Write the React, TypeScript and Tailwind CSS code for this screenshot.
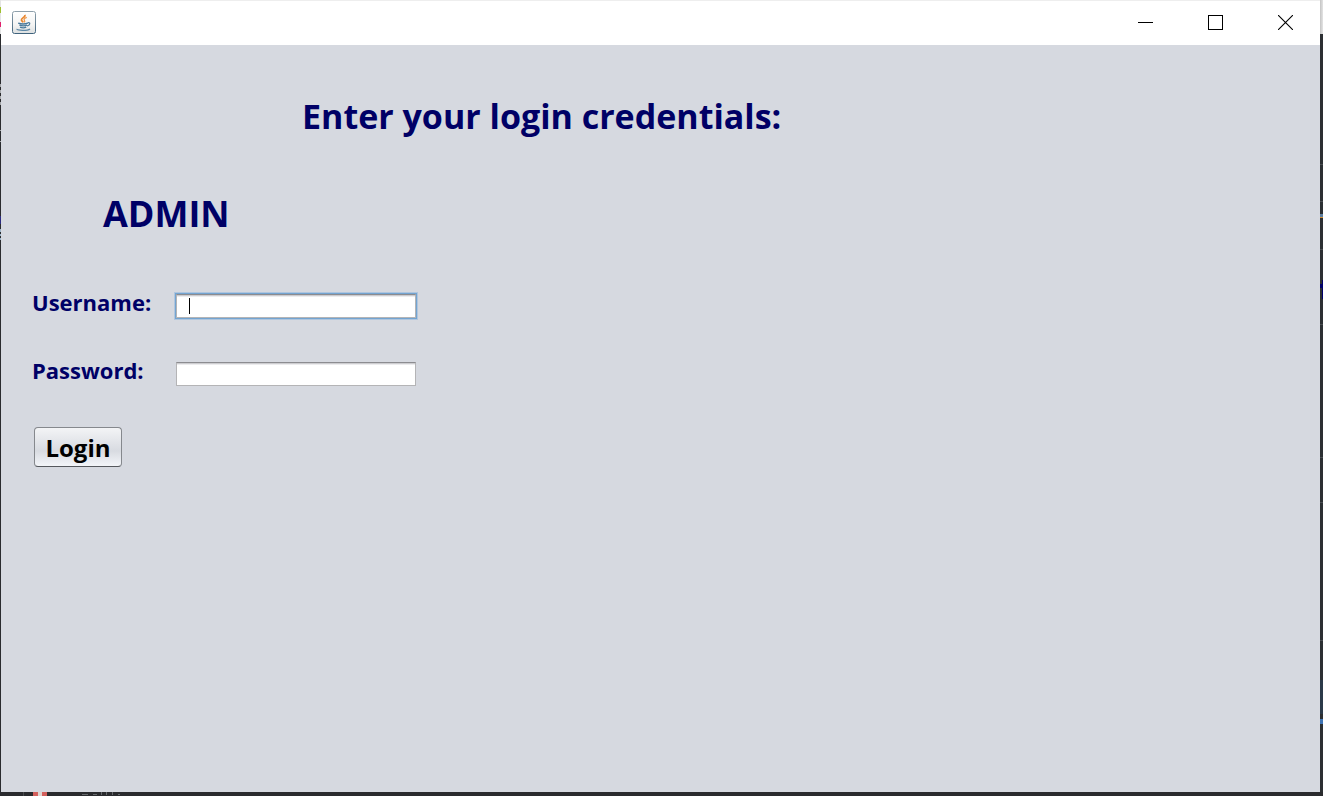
import React from "react";

function JavaIcon() {
  return (
    <svg width="24" height="24" viewBox="0 0 24 24" fill="none" aria-hidden="true">
      <defs>
        <linearGradient id="tile" x1="0" y1="0" x2="0" y2="1">
          <stop offset="0" stopColor="#ffffff" />
          <stop offset="0.6" stopColor="#f4f4f3" />
          <stop offset="1" stopColor="#dcdfe0" />
        </linearGradient>
        <linearGradient id="edge" x1="0" y1="0" x2="0" y2="1">
          <stop offset="0" stopColor="#8fa0ab" />
          <stop offset="1" stopColor="#3f637d" />
        </linearGradient>
      </defs>
      <rect x="0.5" y="0.5" width="23" height="22" rx="2" fill="url(#tile)" stroke="url(#edge)" />
      <path d="M12.8 3.8c1.2 2.4-3.8 3-3.4 5.2.2 1 1.4 1.4 1.8 2.4" stroke="#e8842c" strokeWidth="1.7" />
      <path d="M14.8 6.4c-2.2.8-3.4 1.8-2.4 3 .6.8.4 1.4-.2 2" stroke="#f09a4c" strokeWidth="1.3" />
      <path d="M6.2 12.2c2.6.9 7.2.9 9.6 0M7.4 14.2c2.4.8 5.8.8 7.6 0M8 16.2c2 .8 4.6.8 6.2 0" stroke="#4a7a9c" strokeWidth="1.4" />
      <path d="M15.6 11.8c2.8-.8 3.2 2-.6 3.2" stroke="#4a7a9c" strokeWidth="1.2" />
      <path d="M5 17.9c-.6 1.8 10.8 1.9 13 0" stroke="#5d88a6" strokeWidth="1.3" />
    </svg>
  );
}

function TitleBar() {
  return (
    <header className="flex h-11 items-center justify-between bg-white pb-px pl-[11px]">
      <JavaIcon />
      <div className="flex h-full">
        <button aria-label="Minimize" className="flex w-[70px] items-center justify-center">
          <svg width="15" height="15" viewBox="0 0 15 15" shapeRendering="crispEdges">
            <path d="M0 7.5h15" stroke="#000" />
          </svg>
        </button>
        <button aria-label="Maximize" className="flex w-[70px] items-center justify-center">
          <svg width="15" height="15" viewBox="0 0 15 15" fill="none" shapeRendering="crispEdges">
            <rect x="0.5" y="0.5" width="14" height="14" stroke="#000" />
          </svg>
        </button>
        <button aria-label="Close" className="flex w-[70px] items-center justify-center">
          <svg width="15" height="15" viewBox="0 0 15 15">
            <path d="M0 0L15 15M15 0L0 15" stroke="#000" strokeWidth="1.1" />
          </svg>
        </button>
      </div>
    </header>
  );
}

/* Slivers of the dark editor that shows around the window. */
function LeftSliver() {
  return (
    <div className="w-px">
      <svg width="1" height="250" aria-hidden="true" shapeRendering="crispEdges">
        <rect width="1" height="34" fill="#e4e4e4" />
        <rect y="7" width="1" height="6" fill="#9fc02f" />
        <rect y="22" width="1" height="5" fill="#e0206c" />
        <path d="M.5 84v3M.5 90v3M.5 96v3M.5 102v3M.5 130v1M.5 141v1" stroke="#a5a7aa" />
        <path d="M.5 216v8" stroke="#2b2a80" />
        <path d="M.5 229v3M.5 234v2M.5 238v2" stroke="#9db4c8" />
      </svg>
    </div>
  );
}

function RightSliver() {
  return (
    <div className="w-[3px] bg-linear-to-r from-[#c4c4c4] to-[#e4e4e4]">
      <div className="mt-[34px] h-[calc(100%-34px)] bg-[#2c2f32]">
        <svg width="3" height="700" aria-hidden="true" shapeRendering="crispEdges">
          <path d="M0 130.5h3M0 167.5h3M0 215.5h3M0 290.5h3M0 423.5h3M0 468.5h3M0 606.5h3" stroke="#4a4d51" />
          <rect y="180" width="3" height="3" fill="#5f7f9f" />
          <rect y="183" width="3" height="1" fill="#d08a30" />
          <rect y="250" width="3" height="4" fill="#00006a" />
          <rect x="2" y="246" width="1" height="19" fill="#00006a" />
          <rect y="646" width="3" height="34" fill="#2b3a49" />
          <rect y="685" width="3" height="5" fill="#3f74b4" />
        </svg>
      </div>
    </div>
  );
}

function BottomSliver() {
  return (
    <svg width="130" height="4" className="block" aria-hidden="true" shapeRendering="crispEdges">
      <rect x="23" width="1" height="4" fill="#4a4c4e" />
      <rect x="33" width="14" height="4" fill="#d4605c" />
      <rect x="38" width="4" height="4" fill="#e2d6d2" />
      <path d="M82 2.5h6M93 2.5h4M101.500 0v3M106.500 0v3M112.500 0v3M118 2.500h2" stroke="#66696c" />
    </svg>
  );
}

const fieldClass =
  "block h-6 w-60 border border-[#b4b4b6] border-t-[#8c8c90] bg-white px-3 text-sm text-black caret-transparent shadow-[inset_0_1px_0_#cdcdd0,inset_0_2px_0_#ececee] outline-none";

const focusedFieldClass =
  "block h-6 w-60 border border-[#b4b4b6] border-t-[#8c8c90] bg-white px-3 text-sm text-black caret-transparent shadow-[inset_0_1px_0_#cdcdd0,inset_0_2px_0_#ececee,0_0_0_1px_#73a4d1,0_0_0_2px_#b0c6de] outline-none";

export default function App() {
  return (
    <div className="flex min-h-screen flex-col bg-[#2a2b2e] font-['Open_Sans','Noto_Sans',sans-serif]">
      <div className="flex grow">
        <LeftSliver />
        <div className="flex grow flex-col border-t border-[#eeeeee] bg-[#d6d9e0]">
          <TitleBar />
          <main className="flex flex-col items-start px-[31px] pt-[47px] font-bold text-[#000066]">
            <h1 className="ml-[270px] text-[34px] leading-12">Enter your login credentials:</h1>
            <h2 className="mt-[50px] ml-[71px] text-[36px] leading-12">ADMIN</h2>
            <form className="mt-12 flex flex-col items-start" onSubmit={(e) => e.preventDefault()}>
              <div className="flex h-8 items-start">
                <label htmlFor="username" className="w-36 text-[22px] leading-8">
                  Username:
                </label>
                <div className="relative mt-2">
                  <input id="username" type="text" className={focusedFieldClass} />
                  <span className="absolute top-1 left-[13px] h-4 w-px bg-black" />
                </div>
              </div>
              <div className="mt-9 flex h-8 items-start">
                <label htmlFor="password" className="w-36 text-[22px] leading-8">
                  Password:
                </label>
                <div className="mt-2">
                  <input id="password" type="password" className={fieldClass} />
                </div>
              </div>
              <button
                type="submit"
                className="mt-[41px] ml-0.5 flex h-10 w-[88px] items-center justify-center rounded border border-[#85888d] border-b-[#55585d] bg-linear-to-b from-[#f3f4f6] via-[#d8dbe1] via-60% to-[#f3f5f9] pt-0.5 text-[24px] leading-8 text-black"
              >
                Login
              </button>
            </form>
          </main>
        </div>
        <RightSliver />
      </div>
      <BottomSliver />
    </div>
  );
}
